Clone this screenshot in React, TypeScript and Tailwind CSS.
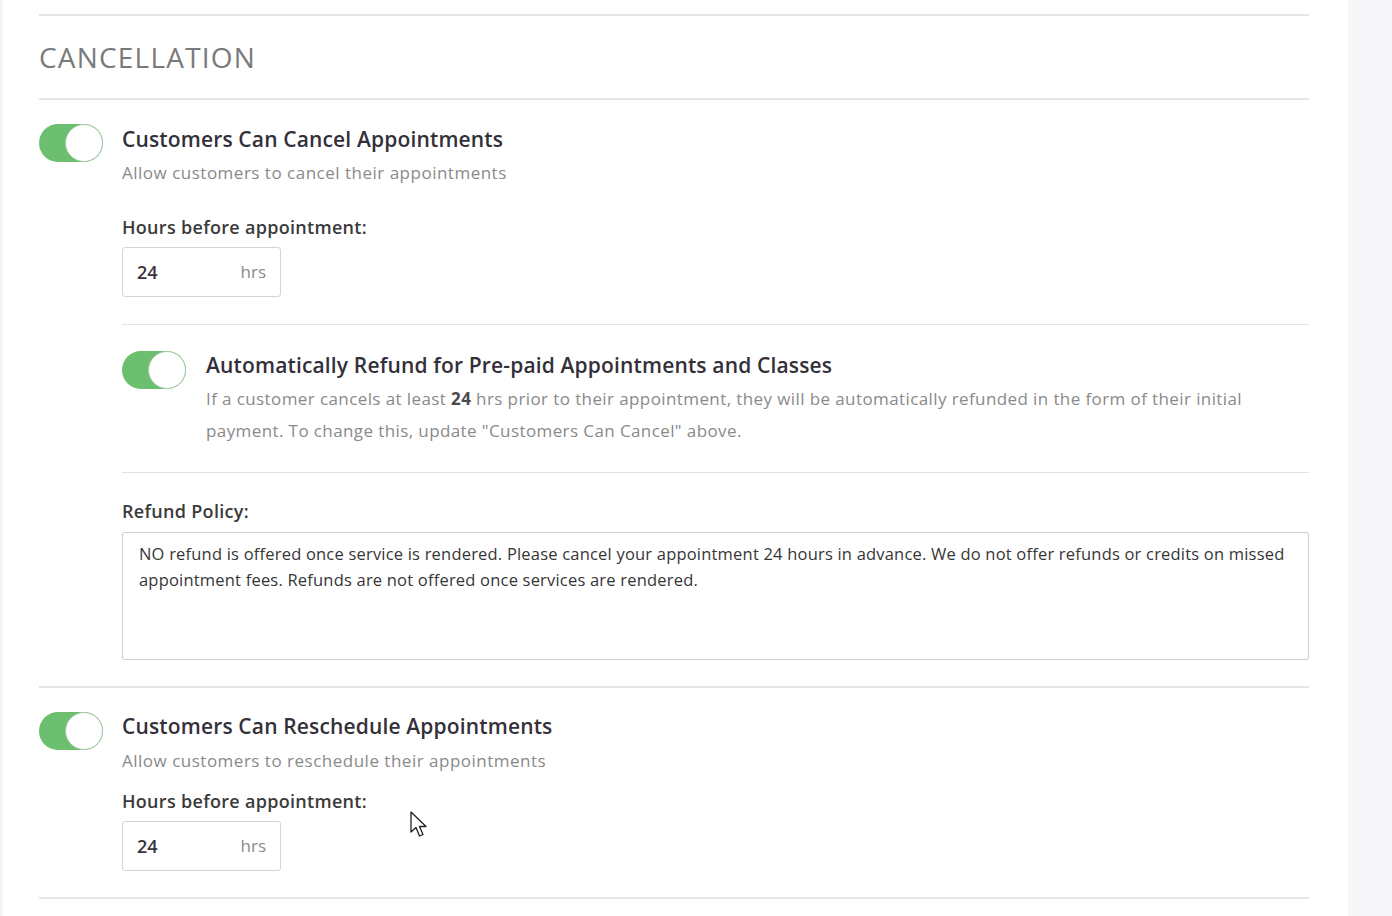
import React from 'react'

const font = { fontFamily: '"Open Sans", "Liberation Sans", sans-serif' }

function Toggle() {
  return (
    <div className="relative w-[64px] h-[38px] rounded-full bg-[#6cbf6e] shrink-0">
      <div className="absolute right-0 top-0 w-[38px] h-[38px] rounded-full bg-white border border-[#a9c9a9]" />
    </div>
  )
}

function HoursInput() {
  return (
    <div className="flex items-center justify-between w-[159px] h-[50px] border border-[#d4d4d4] rounded-[3px] bg-white pl-[14px] pr-[14px]">
      <span className="text-[18px] font-semibold text-[#3a3340]">24</span>
      <span className="text-[17px] text-[#8a8a8a]">hrs</span>
    </div>
  )
}

export default function App() {
  return (
    <div className="relative flex w-[1392px] h-[916px] overflow-hidden bg-white" style={font}>
      <div className="w-[3px] bg-[#f4f4f6]" />
      <div className="flex-1 pl-[36px] pr-[39px]">
        <div className="mt-[14px] h-[2px] bg-[#e6e6e8]" />
        <h2 className="h-[82px] flex items-center text-[28px] tracking-[1.2px] text-[#7a7a7a] font-normal">CANCELLATION</h2>
        <div className="h-[2px] bg-[#e6e6e8]" />

        <div className="flex gap-[19px] pt-[24px]">
          <Toggle />
          <div className="flex-1">
            <div className="text-[21px] leading-[28px] font-semibold tracking-[0.15px] text-[#34303a] mt-[1px]">Customers Can Cancel Appointments</div>
            <div className="text-[17px] leading-[22px] tracking-[0.5px] text-[#8a8a8a] mt-[9px]">Allow customers to cancel their appointments</div>
            <div className="text-[18px] leading-[24px] font-semibold tracking-[0.3px] text-[#3a3a3a] mt-[31px]">Hours before appointment:</div>
            <div className="mt-[8px]"><HoursInput /></div>
            <div className="mt-[27px] h-[1px] bg-[#e3e3e5]" />
            <div className="flex gap-[20px] pt-[26px]">
              <Toggle />
              <div className="flex-1">
                <div className="text-[21px] leading-[28px] font-semibold tracking-[0.15px] text-[#34303a]">Automatically Refund for Pre-paid Appointments and Classes</div>
                <div className="text-[17px] leading-[32px] tracking-[0.4px] text-[#8a8a8a] mt-[4px] pr-[40px]">
                  If a customer cancels at least <b className="font-bold text-[#4a4a4a]">24</b> hrs prior to their appointment, they will be automatically refunded in the form of their initial payment. To change this, update "Customers Can Cancel" above.
                </div>
              </div>
            </div>
            <div className="mt-[25px] h-[1px] bg-[#e3e3e5]" />
            <div className="text-[18px] leading-[24px] font-semibold tracking-[0.3px] text-[#3a3a3a] mt-[26px]">Refund Policy:</div>
            <div className="mt-[9px] h-[128px] border border-[#cfcfcf] rounded-[2px] px-[16px] py-[8px] text-[16.5px] leading-[26px] tracking-[0.2px] text-[#363636]">
              NO refund is offered once service is rendered. Please cancel your appointment 24 hours in advance. We do not offer refunds or credits on missed appointment fees. Refunds are not offered once services are rendered.
            </div>
          </div>
        </div>

        <div className="mt-[26px] h-[2px] bg-[#e6e6e8]" />

        <div className="flex gap-[19px] pt-[24px]">
          <Toggle />
          <div className="flex-1">
            <div className="text-[21px] leading-[28px] font-semibold tracking-[0.15px] text-[#34303a]">Customers Can Reschedule Appointments</div>
            <div className="text-[17px] leading-[22px] tracking-[0.5px] text-[#8a8a8a] mt-[10px]">Allow customers to reschedule their appointments</div>
            <div className="text-[18px] leading-[24px] font-semibold tracking-[0.3px] text-[#3a3a3a] mt-[17px]">Hours before appointment:</div>
            <div className="mt-[8px]"><HoursInput /></div>
          </div>
        </div>
        <div className="mt-[26px] h-[2px] bg-[#e6e6e8]" />
      </div>
      <div className="w-[44px] bg-[#f7f6f9]" />

      <svg className="absolute left-[410px] top-[811px]" width="18" height="27" viewBox="0 0 18 27">
        <path d="M1 1 L1 21 L6 16.5 L9.5 25 L13 23.5 L9.5 15.5 L16 15.5 Z" fill="white" stroke="#222" strokeWidth="1.3" strokeLinejoin="round" />
      </svg>
    </div>
  )
}
